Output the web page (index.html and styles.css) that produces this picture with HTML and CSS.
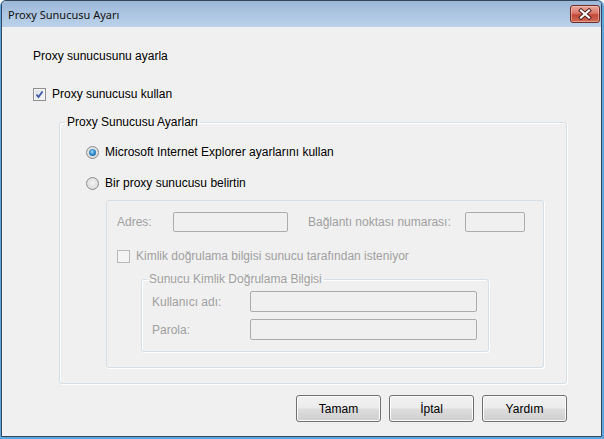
FILE: index.html
```html
<!DOCTYPE html>
<html lang="tr">
<head>
<meta charset="utf-8">
<title>Proxy Sunucusu Ayarı</title>
<link rel="stylesheet" href="styles.css">
</head>
<body>
<div class="frame">
  <div class="window">
    <div class="titlebar">
      <span class="title">Proxy Sunucusu Ayarı</span>
      <span class="close">
        <svg width="30" height="17" viewBox="0 0 30 17">
          <path d="M11 4.5 L19 11.5 M19 4.5 L11 11.5" stroke="#4a1c1c" stroke-width="4" stroke-linecap="square" fill="none"/>
          <path d="M11 4.5 L19 11.5 M19 4.5 L11 11.5" stroke="#ffffff" stroke-width="2.2" stroke-linecap="square" fill="none"/>
        </svg>
      </span>
    </div>
    <div class="client">
      <div class="heading">Proxy sunucusunu ayarla</div>
      <div class="row use-proxy">
        <span class="cb checked">
          <svg width="11" height="11" viewBox="0 0 11 11"><path d="M2.5 5.5 L4.5 8 L8.5 2.5" stroke="#3f56a4" stroke-width="1.8" fill="none"/></svg>
        </span>
        <span>Proxy sunucusu kullan</span>
      </div>
      <fieldset class="group outer">
        <legend>Proxy Sunucusu Ayarları</legend>
        <div class="row radio-row r1"><span class="radio on"></span><span>Microsoft Internet Explorer ayarlarını kullan</span></div>
        <div class="row radio-row r2"><span class="radio"></span><span>Bir proxy sunucusu belirtin</span></div>
        <div class="panel">
          <div class="field-row">
            <span class="lbl adres">Adres:</span><span class="input w-addr"></span>
            <span class="lbl port">Bağlantı noktası numarası:</span><span class="input w-port"></span>
          </div>
          <div class="row auth"><span class="cb disabled"></span><span>Kimlik doğrulama bilgisi sunucu tarafından isteniyor</span></div>
          <fieldset class="group inner">
            <legend>Sunucu Kimlik Doğrulama Bilgisi</legend>
            <div class="field-row cred first"><span class="lbl user">Kullanıcı adı:</span><span class="input w-cred"></span></div>
            <div class="field-row cred second"><span class="lbl user">Parola:</span><span class="input w-cred"></span></div>
          </fieldset>
        </div>
      </fieldset>
      <div class="buttons">
        <button class="btn">Tamam</button>
        <button class="btn">İptal</button>
        <button class="btn">Yardım</button>
      </div>
    </div>
  </div>
</div>
</body>
</html>
```

FILE: styles.css
```css
* { box-sizing: border-box; }
html, body { margin: 0; padding: 0; }
body {
  width: 604px; height: 439px; overflow: hidden;
  font-family: "Liberation Sans", Arial, sans-serif;
  font-size: 12px; color: #000; background: #ffffff;
}
.frame {
  width: 604px; height: 439px;
  background: #5ca7dd;
  padding: 0 2px 2px 1px;
  border-radius: 6px 6px 0 0;
}
.window {
  height: 437px;
  border: 1px solid #34465c;
  border-radius: 5px 5px 0 0;
  display: flex; flex-direction: column;
  overflow: hidden;
  background: #f0f0f0;
}
.titlebar {
  height: 26px; flex: none;
  display: flex; align-items: center;
  padding-left: 6px;
  background: linear-gradient(#9cb8d8, #bcd2ea);
}
.title {
  font-family: "Noto Sans", "Open Sans", sans-serif;
  font-size: 11px; color: #111;
}
.close {
  margin-left: auto; margin-right: 1px;
  align-self: flex-start; margin-top: 4px;
  width: 30px; height: 18px;
  border: 1px solid #6f2b25;
  border-radius: 3px;
  background: linear-gradient(#e9a99c 0%, #d8786a 45%, #c4493a 55%, #cf6a55 100%);
  box-shadow: inset 0 0 0 1px rgba(255,220,210,0.45);
  display: flex; align-items: center; justify-content: center;
}
.close svg { display: block; margin: -1px; }
.client {
  flex: 1;
  padding: 21px 0 0 31px;
}
.heading { line-height: 16px; height: 16px; }
.row { display: flex; align-items: center; height: 16px; line-height: 16px; }
.use-proxy { margin-top: 22px; }
.cb {
  width: 13px; height: 13px; flex: none;
  border: 1px solid #8e8f8f;
  margin-right: 6px;
  display: flex; align-items: center; justify-content: center;
}
.cb.checked {
  background: linear-gradient(135deg, #d9dde4 0%, #f6f7f9 100%);
  box-shadow: inset 0 0 0 1px #f4f4f4;
}
.cb.disabled {
  border-color: #b9b9b9;
  background: #f4f4f4;
}
.group {
  margin: 0;
  border: 1px solid #d5dfe5;
  border-radius: 3px;
  box-shadow: 1px 1px 0 #ffffff, inset 1px 1px 0 #ffffff;
  min-width: 0;
}
.group legend { padding: 0 2px; line-height: 16px; }
.outer {
  margin: 12px 0 0 26px;
  width: 508px;
  padding: 0 0 15px 5px;
}
.radio-row { margin-left: 21px; }
.r1 { margin-top: 14px; }
.r2 { margin-top: 15px; }
.radio {
  width: 13px; height: 13px; flex: none;
  border-radius: 50%;
  border: 1px solid #8b8c8c;
  background: radial-gradient(circle at 50% 45%, #f3f3f3 0%, #e2e2e2 55%, #cfcfcf 100%);
  margin-right: 6px;
  display: flex; align-items: center; justify-content: center;
}
.radio.on::after {
  content: "";
  width: 7px; height: 7px; border-radius: 50%;
  background: radial-gradient(circle at 45% 40%, #9fdcf8 0%, #2f86c7 50%, #0f4c87 100%);
}
.panel {
  margin: 9px 0 0 41px;
  width: 438px;
  border: 1px solid #d5dfe5;
  border-radius: 3px;
  box-shadow: 1px 1px 0 #ffffff;
  padding: 11px 0 15px 10px;
  color: #a0a0a0;
}
.field-row { display: flex; align-items: center; height: 20px; }
.lbl { flex: none; }
.adres { width: 56px; }
.port { width: 157px; margin-left: 20px; }
.input {
  flex: none; height: 20px;
  border: 1px solid #adadad;
  border-radius: 2px;
  background: #f0f0f0;
}
.w-addr { width: 115px; }
.w-port { width: 60px; }
.auth { margin-top: 16px; }
.inner {
  margin: 7px 0 0 24px;
  width: 348px;
  padding: 0 0 11px 5px;
  color: #a0a0a0;
}
.cred { height: 21px; }
.cred .input { height: 21px; }
.cred.first { margin-top: 4px; }
.cred.second { margin-top: 7px; }
.user { width: 98px; margin-left: 5px; }
.w-cred { width: 227px; }
.buttons {
  margin: 11px 0 0 26px;
  width: 508px;
  display: flex; justify-content: flex-end; gap: 8px;
}
.btn {
  width: 85px; height: 27px;
  font-family: "Liberation Sans", Arial, sans-serif;
  font-size: 12px; color: #000;
  border: 1px solid #707070;
  border-radius: 3px;
  background: linear-gradient(#f2f2f2 0%, #ebebeb 48%, #dddddd 52%, #cfcfcf 100%);
  box-shadow: inset 0 0 0 1px #fbfbfb;
  padding: 0;
}
```
